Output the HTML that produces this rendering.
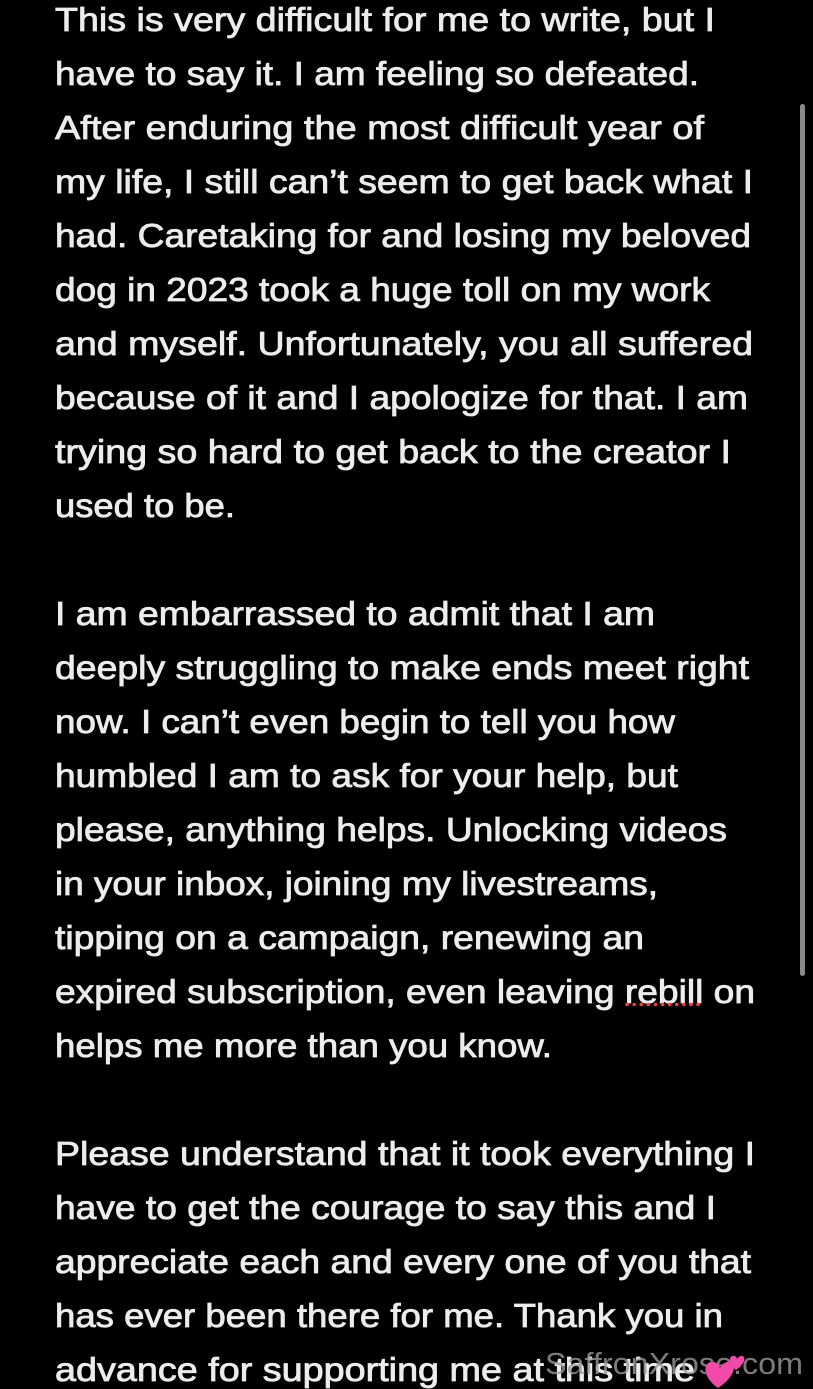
<!DOCTYPE html>
<html><head><meta charset="utf-8"><style>
html,body{margin:0;padding:0;background:#000;width:813px;height:1389px;overflow:hidden}
svg{display:block}
text{font-family:"Liberation Sans",sans-serif;font-size:33px;fill:#ececec;stroke:#ececec;stroke-width:0.8px}
</style></head><body>
<svg width="813" height="1389" viewBox="0 0 813 1389">
<rect x="800" y="104" width="5" height="872" rx="2.5" fill="#8a8a8a"/>
<g>
<text x="55" y="31" textLength="660" lengthAdjust="spacingAndGlyphs">This is very difficult for me to write, but I</text>
<text x="55" y="85" textLength="644" lengthAdjust="spacingAndGlyphs">have to say it. I am feeling so defeated.</text>
<text x="55" y="139" textLength="649" lengthAdjust="spacingAndGlyphs">After enduring the most difficult year of</text>
<text x="55" y="193" textLength="698" lengthAdjust="spacingAndGlyphs">my life, I still can’t seem to get back what I</text>
<text x="55" y="247" textLength="696" lengthAdjust="spacingAndGlyphs">had. Caretaking for and losing my beloved</text>
<text x="55" y="301" textLength="655" lengthAdjust="spacingAndGlyphs">dog in 2023 took a huge toll on my work</text>
<text x="55" y="355" textLength="698" lengthAdjust="spacingAndGlyphs">and myself. Unfortunately, you all suffered</text>
<text x="55" y="409" textLength="693" lengthAdjust="spacingAndGlyphs">because of it and I apologize for that. I am</text>
<text x="55" y="463" textLength="676" lengthAdjust="spacingAndGlyphs">trying so hard to get back to the creator I</text>
<text x="55" y="517" textLength="180" lengthAdjust="spacingAndGlyphs">used to be.</text>
<text x="55" y="625" textLength="600" lengthAdjust="spacingAndGlyphs">I am embarrassed to admit that I am</text>
<text x="55" y="679" textLength="694" lengthAdjust="spacingAndGlyphs">deeply struggling to make ends meet right</text>
<text x="55" y="733" textLength="620" lengthAdjust="spacingAndGlyphs">now. I can’t even begin to tell you how</text>
<text x="55" y="787" textLength="623" lengthAdjust="spacingAndGlyphs">humbled I am to ask for your help, but</text>
<text x="55" y="841" textLength="672" lengthAdjust="spacingAndGlyphs">please, anything helps. Unlocking videos</text>
<text x="55" y="895" textLength="603" lengthAdjust="spacingAndGlyphs">in your inbox, joining my livestreams,</text>
<text x="55" y="949" textLength="589" lengthAdjust="spacingAndGlyphs">tipping on a campaign, renewing an</text>
<text x="55" y="1003" textLength="700" lengthAdjust="spacingAndGlyphs">expired subscription, even leaving rebill on</text>
<text x="55" y="1057" textLength="497" lengthAdjust="spacingAndGlyphs">helps me more than you know.</text>
<text x="55" y="1165" textLength="700" lengthAdjust="spacingAndGlyphs">Please understand that it took everything I</text>
<text x="55" y="1219" textLength="661" lengthAdjust="spacingAndGlyphs">have to get the courage to say this and I</text>
<text x="55" y="1273" textLength="696" lengthAdjust="spacingAndGlyphs">appreciate each and every one of you that</text>
<text x="55" y="1327" textLength="668" lengthAdjust="spacingAndGlyphs">has ever been there for me. Thank you in</text>
<text x="55" y="1381" textLength="640" lengthAdjust="spacingAndGlyphs">advance for supporting me at this time</text>
</g>
<line x1="627" y1="1004.5" x2="705" y2="1004.5" stroke="#ef3f3f" stroke-width="3.5" stroke-linecap="round" stroke-dasharray="0.1 7"/>
<text x="545" y="1374" textLength="258" lengthAdjust="spacingAndGlyphs" style="fill:#9a9a9a;fill-opacity:.8;stroke:none;font-size:31px">SaffronXrose.com</text>
<path d="M718 1388 C700 1375 704 1360 714 1362 C718 1363 719 1366 720 1368 C721 1366 723 1363 727 1362 C737 1360 738 1375 718 1388Z" fill="#f24aa8"/>
<path d="M736 1370 C727 1364 729 1355 734 1356 C736 1356 737 1358 737 1359 C738 1358 739 1356 741 1356 C746 1355 746 1364 736 1370Z" fill="#f24aa8"/>
</svg>
</body></html>
